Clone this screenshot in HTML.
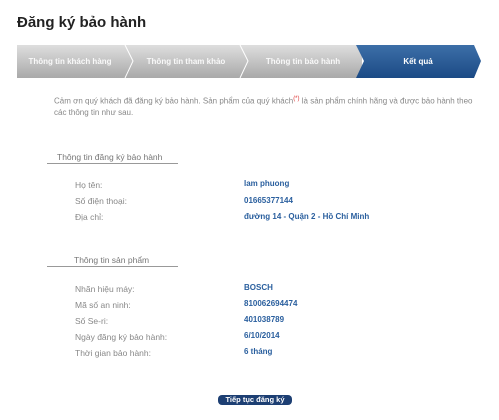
<!DOCTYPE html>
<html><head><meta charset="utf-8">
<style>
html,body{margin:0;padding:0;background:#fff;width:499px;height:420px;overflow:hidden;position:relative;font-family:"Liberation Sans",Arial,sans-serif}
.a{position:absolute;white-space:nowrap}
.t{left:17px;top:14px;font-size:15px;font-weight:bold;color:#222}
.intro{left:54px;top:94px;font-size:8px;color:#888;line-height:11px}
.h{font-size:8.5px;color:#777}
.line{position:absolute;height:1px;background:#999;left:47px;width:131px}
.l{left:75px;font-size:8.5px;color:#888}
.v{left:244px;font-size:8px;color:#2a5f9e;font-weight:bold}
.btn{left:218px;top:395px;width:74px;height:10px;background:#1d3f73;border-radius:4px;color:#fff;font-size:7.5px;font-weight:bold;text-align:center;line-height:10px}
</style></head><body>
<div class="a t">Đăng ký bảo hành</div>
<svg class="a" style="left:0;top:0" width="499" height="90">
<defs>
<linearGradient id="g" x1="0" y1="0" x2="0" y2="1"><stop offset="0" stop-color="#dedede"/><stop offset="1" stop-color="#a9a9a9"/></linearGradient>
<linearGradient id="b" x1="0" y1="0" x2="0" y2="1"><stop offset="0" stop-color="#3d6fa8"/><stop offset="1" stop-color="#1b4a85"/></linearGradient>
</defs>
<rect x="17" y="45" width="345" height="33" fill="url(#g)"/>
<polygon points="356,45 474,45 481,61 474,78 356,78 364,61" fill="url(#b)"/>
<polyline points="125,45 133,61 125,78" fill="none" stroke="#fff" stroke-width="1"/>
<polyline points="240,45 248,61 240,78" fill="none" stroke="#fff" stroke-width="1"/>
<g font-family="Liberation Sans,Arial,sans-serif" font-size="8" fill="#fff" font-weight="bold" text-anchor="middle">
<text x="70" y="64" opacity=".9">Thông tin khách hàng</text>
<text x="186" y="64" opacity=".9">Thông tin tham khảo</text>
<text x="303" y="64" opacity=".9">Thông tin bảo hành</text>
<text x="418" y="64">Kết quả</text>
</g>
</svg>
<div class="a intro">Cảm ơn quý khách đã đăng ký bảo hành. Sản phẩm của quý khách<sup style="color:#d33;font-size:6px">(*)</sup> là sản phẩm chính hãng và được bảo hành theo<br>các thông tin như sau.</div>
<div class="a h" style="left:57px;top:152px">Thông tin đăng ký bảo hành</div>
<div class="line" style="top:163px"></div>
<div class="a l" style="top:180px">Họ tên:</div><div class="a v" style="top:179px">lam phuong</div>
<div class="a l" style="top:196px">Số điện thoại:</div><div class="a v" style="top:196px">01665377144</div>
<div class="a l" style="top:212px">Địa chỉ:</div><div class="a v" style="top:212px">đường 14 - Quận 2 - Hồ Chí Minh</div>
<div class="a h" style="left:74px;top:255px">Thông tin sản phẩm</div>
<div class="line" style="top:266px"></div>
<div class="a l" style="top:284px">Nhãn hiệu máy:</div><div class="a v" style="top:283px">BOSCH</div>
<div class="a l" style="top:300px">Mã số an ninh:</div><div class="a v" style="top:299px">810062694474</div>
<div class="a l" style="top:316px">Số Se-ri:</div><div class="a v" style="top:315px">401038789</div>
<div class="a l" style="top:332px">Ngày đăng ký bảo hành:</div><div class="a v" style="top:331px">6/10/2014</div>
<div class="a l" style="top:348px">Thời gian bảo hành:</div><div class="a v" style="top:347px">6 tháng</div>
<div class="a btn">Tiếp tục đăng ký</div>
</body></html>
